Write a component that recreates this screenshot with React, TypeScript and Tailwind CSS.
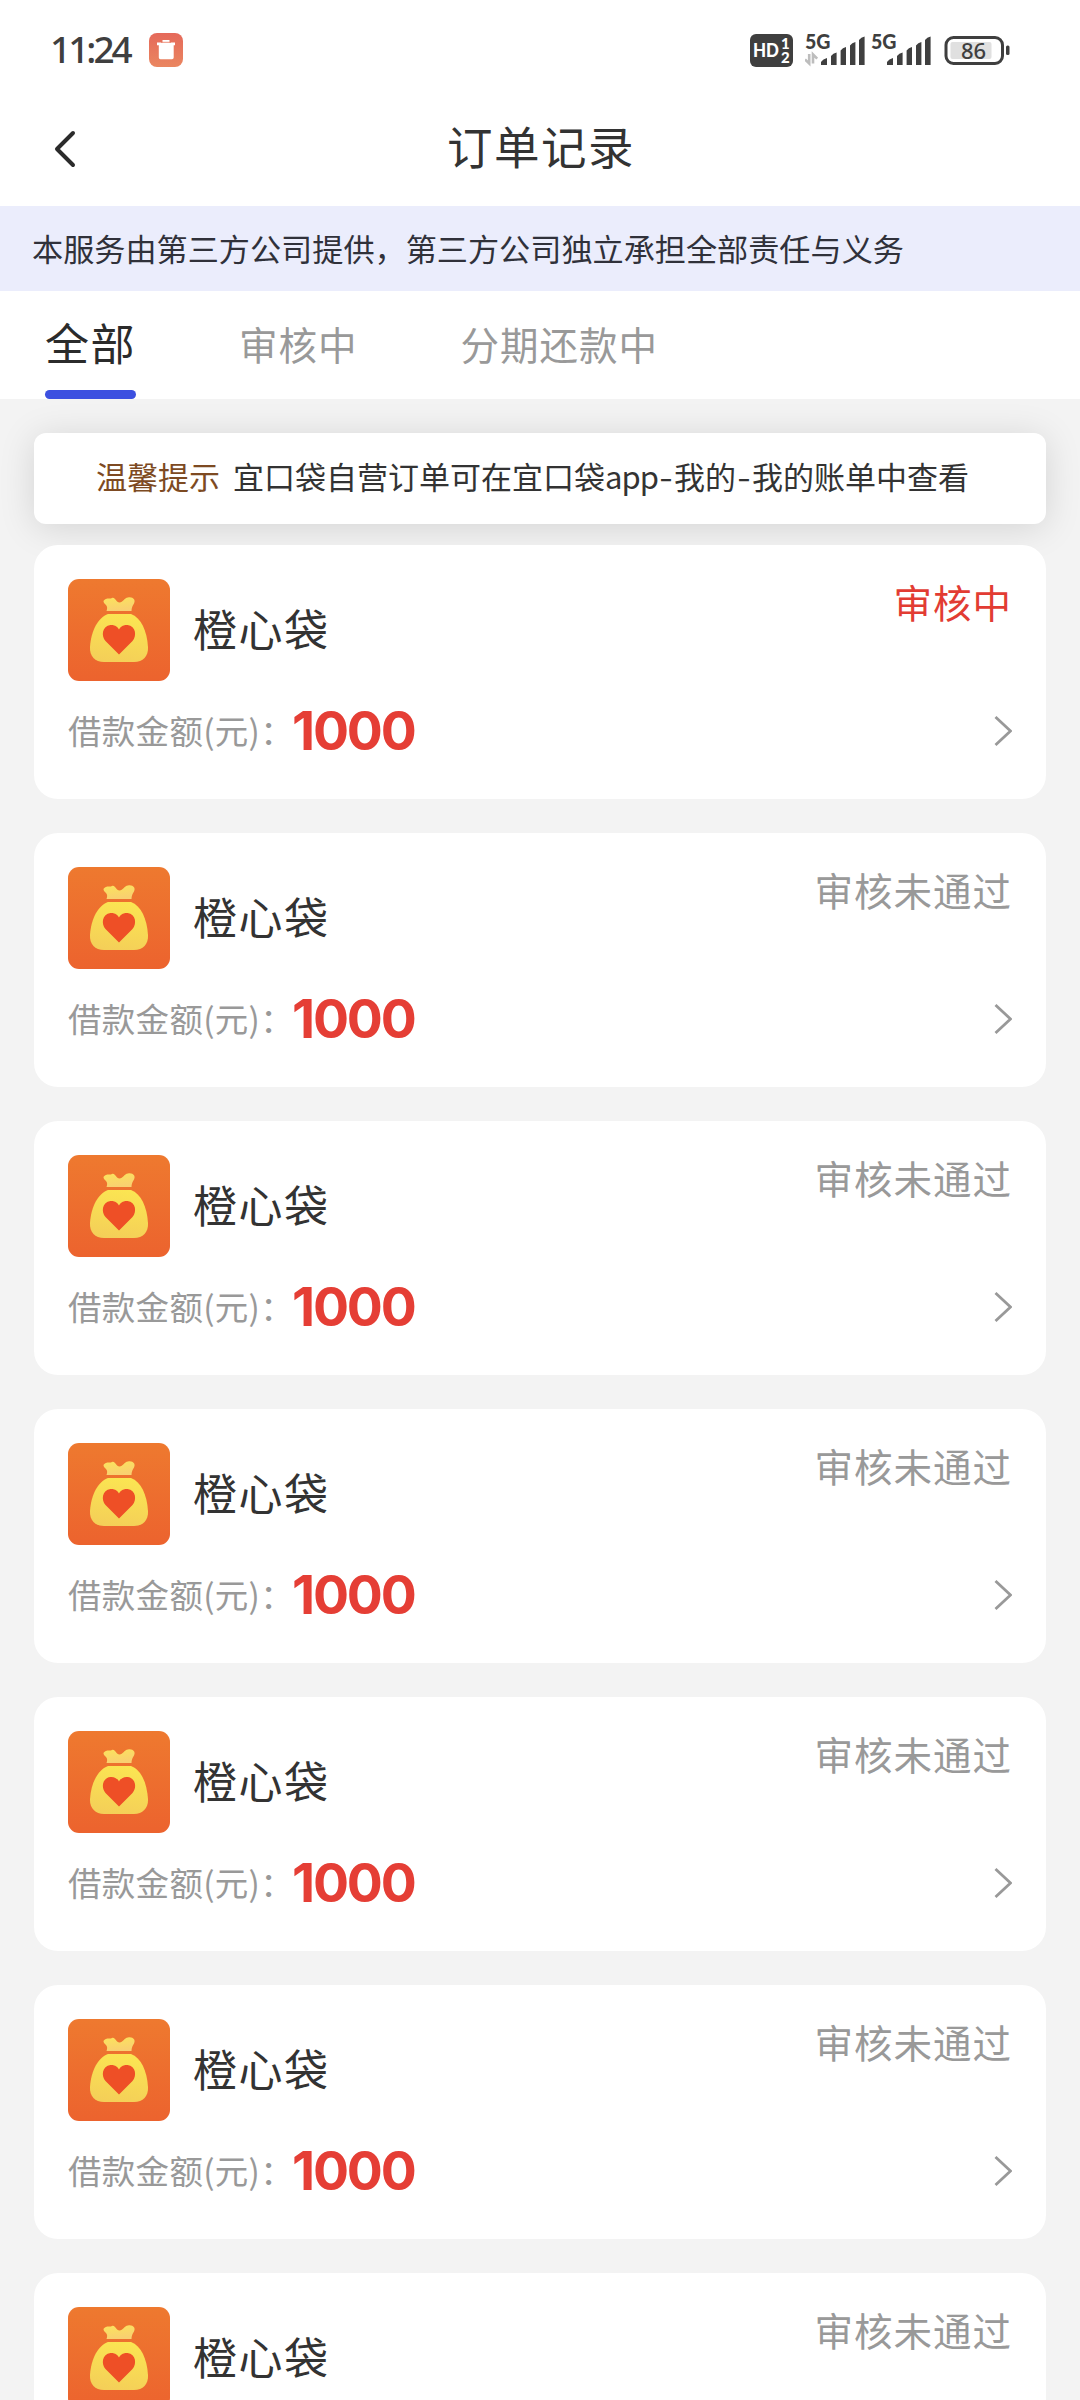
import clsx from "clsx";

interface Order {
  id: number;
  name: string;
  amount: number;
  status: string;
  pending?: boolean;
}

const tabs = ["全部", "审核中", "分期还款中"];

const orders: Order[] = [
  { id: 1, name: "橙心袋", amount: 1000, status: "审核中", pending: true },
  { id: 2, name: "橙心袋", amount: 1000, status: "审核未通过" },
  { id: 3, name: "橙心袋", amount: 1000, status: "审核未通过" },
  { id: 4, name: "橙心袋", amount: 1000, status: "审核未通过" },
  { id: 5, name: "橙心袋", amount: 1000, status: "审核未通过" },
  { id: 6, name: "橙心袋", amount: 1000, status: "审核未通过" },
  { id: 7, name: "橙心袋", amount: 1000, status: "审核未通过" },
];

const TrashIcon = () => (
  <svg className="ml-[19px] size-[34px]" viewBox="0 0 34 34">
    <defs>
      <linearGradient id="trash" x1="0" y1="0" x2="0" y2="1">
        <stop offset="0" stopColor="#e5695a" />
        <stop offset="1" stopColor="#ea8660" />
      </linearGradient>
    </defs>
    <rect width="34" height="34" rx="8" fill="url(#trash)" />
    <path
      d="M13.500 7h7v2.500h5.500v2.700H24.700V24.500a1.700 1.700 0 0 1-1.700 1.700H11.500a1.700 1.700 0 0 1-1.700-1.700V12.200H8V9.500h5.500z"
      fill="#fff"
    />
    <path d="M12 9.300h10" stroke="#e8755c" strokeWidth="0.800" />
  </svg>
);

const HdIcon = () => (
  <svg
    className="h-[33px] w-[43px]"
    viewBox="0 0 43 33"
    fill="#fff"
    fontFamily="Lato, sans-serif"
    fontWeight="900"
  >
    <rect width="43" height="33" rx="6" fill="#3f3f3f" />
    <text x="3" y="23" fontSize="19" textLength="26" lengthAdjust="spacingAndGlyphs">
      HD
    </text>
    <text x="31" y="15" fontSize="15">
      1
    </text>
    <text x="31" y="29" fontSize="15">
      2
    </text>
  </svg>
);

const SignalIcon = ({ active }: { active?: boolean }) => (
  <svg className="h-[45px] w-[62px]" viewBox="0 -6 62 45" fill="#3f3f3f">
    <text
      x="0"
      y="15"
      fontSize="20"
      fontWeight="900"
      fontFamily="Lato, sans-serif"
      textLength="25.5"
      lengthAdjust="spacingAndGlyphs"
    >
      5G
    </text>
    {active && (
      <path
        d="M4.200 20v9.500L0 25.500M8 29.500V20.500l4.200 4.200"
        fill="none"
        stroke="#bdbdbd"
        strokeWidth="2.600"
      />
    )}
    <path d="M16 28q2-3 6-4v7h-6zM26 22q2-3 5.600-3.600v12.600h-5.600zM35.600 16.500q2-3 5.400-3.500v18h-5.400zM45 11.500q2-3 5.400-3.500v23h-5.400zM54 6q2-3 5.600-3.500v28.500h-5.600z" />
  </svg>
);

const BatteryIcon = () => (
  <svg className="ml-[11px] h-[33px] w-[67px]" viewBox="0 0 67 33">
    <rect
      x="2"
      y="3.500"
      width="56.500"
      height="26"
      rx="7.500"
      fill="none"
      stroke="#3f3f3f"
      strokeWidth="3"
    />
    <rect x="6.500" y="8" width="41" height="17" rx="2" fill="#e0e0e0" />
    <rect x="62" y="11.500" width="3.500" height="9.500" rx="1.500" fill="#3f3f3f" />
    <text
      x="29.500"
      y="24.500"
      fontSize="22"
      fontFamily="'Noto Sans', sans-serif"
      fontWeight="500"
      textAnchor="middle"
      fill="#3f3f3f"
    >
      86
    </text>
  </svg>
);

const BagIcon = () => (
  <svg className="size-[102px]" viewBox="0 0 102 102">
    <defs>
      <linearGradient id="bagBg" x1="0" y1="0" x2="0" y2="1">
        <stop offset="0" stopColor="#ee792f" />
        <stop offset="1" stopColor="#ec632e" />
      </linearGradient>
      <linearGradient id="bagTop" x1="0" y1="0" x2="0.300" y2="1">
        <stop offset="0" stopColor="#fbe35c" />
        <stop offset="1" stopColor="#f9d070" />
      </linearGradient>
      <linearGradient id="bagBody" x1="0.600" y1="0" x2="0.400" y2="1">
        <stop offset="0" stopColor="#fbe552" />
        <stop offset="1" stopColor="#f4cf58" />
      </linearGradient>
    </defs>
    <rect width="102" height="102" rx="11" fill="url(#bagBg)" />
    <path
      d="M38.500 32Q40 28 38 26Q33.500 22 37 20.500C40 18.500 41.500 20.500 44 19C47 17.500 48 23.500 51.500 23.500C55 23.500 56 19 60 18.500C65 17.500 68 21 66 24.500C64.500 27 63.500 29 63.500 32Z"
      fill="url(#bagTop)"
    />
    <path
      d="M40 35H63C73 38.500 79 52 80 68C80.500 77 75 83 66 83H36C27 83 21.500 77 22 68C23 52 30 38.500 40 35Z"
      fill="url(#bagBody)"
    />
    <path
      d="M51 75.500L37.500 62C33 57 34 47 42.500 46C46.500 45.500 50 48 51 50.500C52 48 55.500 45.500 59.500 46C68 47 69 57 64.500 62Z"
      fill="#ee4f26"
    />
  </svg>
);

const StatusBar = () => (
  <div className="flex h-[100px] items-center pl-[50px] pr-[69px]">
    <span className="w-20 whitespace-nowrap pb-0.5 font-['Noto_Sans','Noto_Sans_CJK_SC',sans-serif] text-[37px] font-medium tracking-[-3px] text-[#3f3f3f]">
      11:24
    </span>
    <TrashIcon />
    <div className="ml-auto flex items-center">
      <HdIcon />
      <div className="ml-3 flex gap-1">
        <SignalIcon active />
        <SignalIcon />
      </div>
      <BatteryIcon />
    </div>
  </div>
);

const Header = () => (
  <div className="grid h-[106px] grid-cols-[1fr_auto_1fr] items-center pb-[9px]">
    <button className="ml-[54px] justify-self-start">
      <svg
        className="h-[38px] w-[22px]"
        viewBox="0 0 22 38"
        fill="none"
        stroke="#2b2b2b"
        strokeWidth="4"
        strokeLinecap="round"
        strokeLinejoin="round"
      >
        <path d="M19 3L3 19l16 16" />
      </svg>
    </button>
    <h1 className="pb-[5px] pl-0.5 text-[45.5px] leading-none tracking-[1.5px] text-[#333]">
      订单记录
    </h1>
  </div>
);

const OrderCard = ({ order }: { order: Order }) => (
  <div className="h-[254px] shrink-0 rounded-3xl bg-white px-[34px] pt-[34px]">
    <div className="flex h-[102px]">
      <BagIcon />
      <h2 className="ml-[23px] self-center pb-[5px] text-[44px] leading-none tracking-[1.5px] text-[#333]">
        {order.name}
      </h2>
      <span
        className={clsx(
          "ml-auto mt-[3px] text-[38.5px] leading-none tracking-[1px]",
          order.pending ? "text-[#e23c33]" : "text-[#999]"
        )}
      >
        {order.status}
      </span>
    </div>
    <div className="flex h-[100px] items-center">
      <span className="pb-0.5 text-[33.500px] leading-none tracking-[0.3px] text-[#999]">
        借款金额(元)：
      </span>
      <span className="-ml-0.5 font-['Inter',sans-serif] text-[53.5px] font-bold leading-none tracking-[-2.2px] text-[#e53e35]">
        {order.amount}
      </span>
      <svg
        className="ml-auto h-8 w-[19px]"
        viewBox="0 0 19 32"
        fill="none"
        stroke="#999"
        strokeWidth="2.800"
      >
        <path d="M2.500 2L17.500 16L2.500 30" />
      </svg>
    </div>
  </div>
);

const Dash = () => (
  <span className="inline-block w-4 scale-x-125 text-center">-</span>
);

const App = () => {
  return (
    <div className="flex h-[2400px] w-[1080px] flex-col overflow-hidden bg-[#f3f3f3] font-['Noto_Sans_CJK_SC',sans-serif]">
      <div className="relative z-10 bg-white">
        <StatusBar />
        <Header />
        <p className="flex h-[85px] items-center bg-[#ebedfc] pb-0.5 pl-8 text-[31.15px] leading-none text-[#30313a]">
          本服务由第三方公司提供，第三方公司独立承担全部责任与义务
        </p>
        <nav className="flex h-[108px] gap-[103px] pl-[45px]">
          {tabs.map((tab, i) => (
            <button
              key={tab}
              className={clsx(
                "flex flex-col justify-between leading-none",
                i === 0
                  ? "pt-[29px] text-[44px] tracking-[1.5px] text-[#2b2b2b]"
                  : "pt-[33px] text-[38.5px] tracking-[1px] text-[#999]"
              )}
            >
              {tab}
              {i === 0 && (
                <span className="h-[9px] w-full rounded-full bg-[#3c50e0]" />
              )}
            </button>
          ))}
        </nav>
      </div>

      <main className="flex flex-col px-[34px] pt-[34px]">
        <div className="flex h-[91px] shrink-0 items-center gap-[13px] rounded-xl bg-white pb-1.5 pl-[62px] text-[31px] leading-none shadow-[0_4px_36px_rgba(0,0,0,0.13)]">
          <span className="text-[#7d4a22]">温馨提示</span>
          <span className="text-[#333]">
            宜口袋自营订单可在宜口袋<span className="tracking-[-1px]">app</span>
            <Dash />
            我的
            <Dash />
            我的账单中查看
          </span>
        </div>
        <div className="relative mt-[21px] flex flex-col gap-[34px]">
          {orders.map((order) => (
            <OrderCard key={order.id} order={order} />
          ))}
        </div>
      </main>
    </div>
  );
};

export default App;
